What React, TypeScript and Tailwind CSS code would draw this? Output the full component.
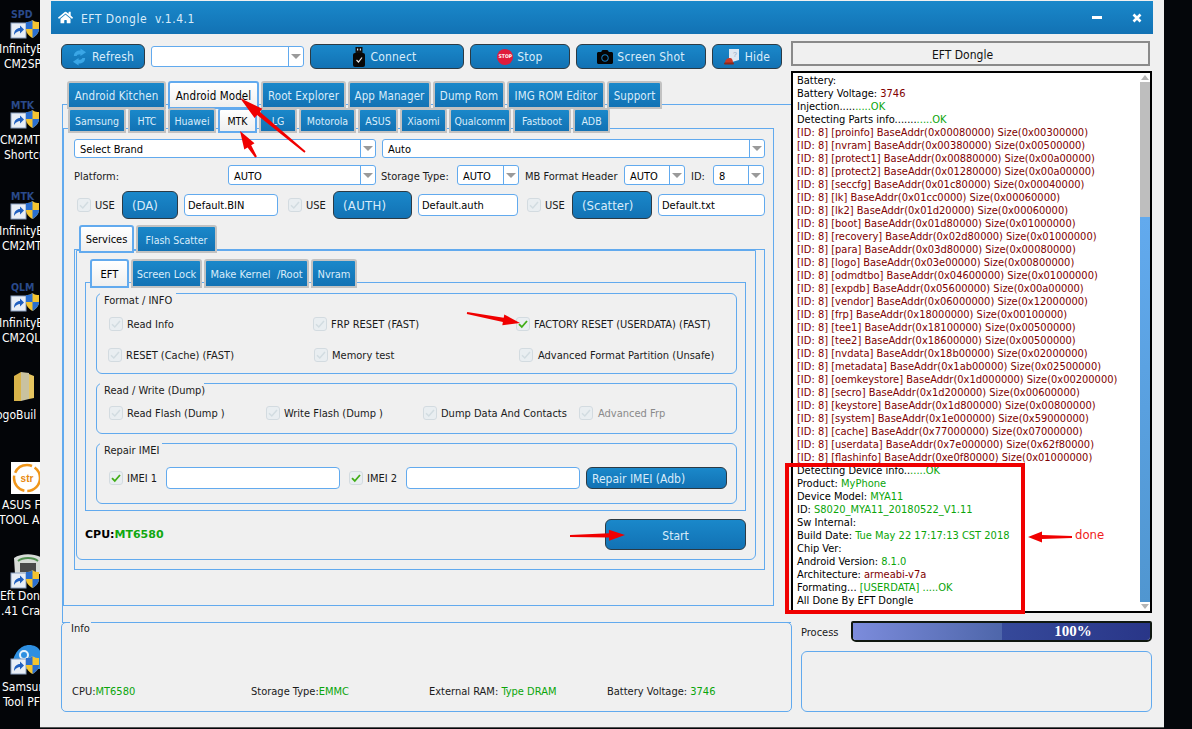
import React from "react";
import { FaHome, FaCamera } from "react-icons/fa";

const FONT = "font-['DejaVu_Sans_Condensed','Noto_Sans',sans-serif]";
const BLUE = "bg-gradient-to-b from-[#1a88ca] to-[#1272b4]";

function Tab({ label, w, h, active, cls = "text-[11px]" }: { label: string; w: number; h: number; active?: boolean; cls?: string }) {
  return (
    <div
      style={{ width: w, height: h }}
      className={
        "flex items-center justify-center shrink-0 whitespace-pre rounded-t-[3px] border-2 pt-[3px] " +
        cls +
        " " +
        (active
          ? "border-[#62aaee] bg-gradient-to-b from-white to-[#efefef] text-black"
          : "border-[#c2c2c2] text-[#d9ecfa] " + BLUE)
      }
    >
      {label}
    </div>
  );
}

function Caret() {
  return (
    <div className="flex w-[15px] h-full shrink-0 items-center justify-center border-l border-[#62aaee]">
      <div className="w-0 h-0 border-x-[5px] border-x-transparent border-t-[5px] border-t-[#9a9a9a]" />
    </div>
  );
}

function Select({ w, h = 20, text, cls = "" }: { w: number; h?: number; text?: string; cls?: string }) {
  return (
    <div
      style={{ width: w, height: h }}
      className={"flex shrink-0 items-center rounded-[3px] border border-[#62aaee] bg-white text-black " + cls}
    >
      <div className="flex-1 pl-[5px] pt-[3px] text-[11px] leading-[14px]">{text}</div>
      <Caret />
    </div>
  );
}

function Input({ w, h = 22, text }: { w: number; h?: number; text?: string }) {
  return (
    <div
      style={{ width: w, height: h }}
      className="flex shrink-0 items-center rounded-[4px] border border-[#62aaee] bg-white pl-[3px] pt-[2px] text-[11px] text-black"
    >
      {text}
    </div>
  );
}

function Check({ on }: { on?: boolean }) {
  return (
    <svg width="14" height="14" viewBox="0 0 14 14" className="shrink-0">
      <rect x="0.5" y="0.5" width="13" height="13" rx="2.5" fill="#e9eef1" stroke="#d3dbe0" />
      <path
        d="M3 7.2 L5.8 10 L11 4"
        fill="none"
        stroke={on ? "#41ad17" : "#d2dce1"}
        strokeWidth={on ? 1.8 : 1.5}
      />
    </svg>
  );
}

function CheckLabel({ label, w, gap = 4, on, dim }: { label: string; w?: number; gap?: number; on?: boolean; dim?: boolean }) {
  return (
    <div style={{ width: w, columnGap: gap }} className="flex h-[14px] shrink-0 items-center whitespace-nowrap">
      <Check on={on} />
      <span className={"pt-[2px] text-[11px] " + (dim ? "text-[#8a8a8a]" : "text-[#1a1a1a]")}>{label}</span>
    </div>
  );
}

function DarkBtn({ w, h, children, cls = "" }: { w: number; h: number; children?: React.ReactNode; cls?: string }) {
  return (
    <div
      style={{ width: w, height: h }}
      className={
        "flex shrink-0 items-center justify-center whitespace-nowrap rounded-[6px] border border-[#2b3a44] pt-[2px] text-[#d9ecfa] " +
        BLUE +
        " " +
        cls
      }
    >
      {children}
    </div>
  );
}

function Group({ title, titleW, h, mt, children }: { title: string; titleW: number; h: number; mt: number; children?: React.ReactNode }) {
  return (
    <div
      style={{ height: h, marginTop: mt }}
      className="relative ml-[10px] w-[641px] rounded-[6px] border border-[#62aaee]"
    >
      <div
        style={{ width: titleW }}
        className="absolute left-[3px] top-[-1px] h-[13px] whitespace-nowrap bg-[#f0f0f0] pl-[4px] text-[11px] leading-[16px] text-[#1a1a1a]"
      >
        {title}
      </div>
      {children}
    </div>
  );
}

function Arrow({ x1, y1, x2, y2, head = 17, hw = 5.5 }: { x1: number; y1: number; x2: number; y2: number; head?: number; hw?: number }) {
  const dx = x2 - x1;
  const dy = y2 - y1;
  const l = Math.hypot(dx, dy);
  const ux = dx / l;
  const uy = dy / l;
  const nx = -uy;
  const ny = ux;
  const bx = x2 - ux * head;
  const by = y2 - uy * head;
  const p = (x: number, y: number) => x.toFixed(1) + "," + y.toFixed(1);
  return (
    <polygon
      fill="#f00000"
      points={[
        p(x1 + nx * 1, y1 + ny * 1),
        p(bx + nx * 2.1, by + ny * 2.1),
        p(bx + nx * hw, by + ny * hw),
        p(x2, y2),
        p(bx - nx * hw, by - ny * hw),
        p(bx - nx * 2.1, by - ny * 2.1),
        p(x1 - nx * 1, y1 - ny * 1),
      ].join(" ")}
    />
  );
}

const parts: [string, string, string][] = [
  ["proinfo", "0x00080000", "0x00300000"],
  ["nvram", "0x00380000", "0x00500000"],
  ["protect1", "0x00880000", "0x00a00000"],
  ["protect2", "0x01280000", "0x00a00000"],
  ["seccfg", "0x01c80000", "0x00040000"],
  ["lk", "0x01cc0000", "0x00060000"],
  ["lk2", "0x01d20000", "0x00060000"],
  ["boot", "0x01d80000", "0x01000000"],
  ["recovery", "0x02d80000", "0x01000000"],
  ["para", "0x03d80000", "0x00080000"],
  ["logo", "0x03e00000", "0x00800000"],
  ["odmdtbo", "0x04600000", "0x01000000"],
  ["expdb", "0x05600000", "0x00a00000"],
  ["vendor", "0x06000000", "0x12000000"],
  ["frp", "0x18000000", "0x00100000"],
  ["tee1", "0x18100000", "0x00500000"],
  ["tee2", "0x18600000", "0x00500000"],
  ["nvdata", "0x18b00000", "0x02000000"],
  ["metadata", "0x1ab00000", "0x02500000"],
  ["oemkeystore", "0x1d000000", "0x00200000"],
  ["secro", "0x1d200000", "0x00600000"],
  ["keystore", "0x1d800000", "0x00800000"],
  ["system", "0x1e000000", "0x59000000"],
  ["cache", "0x77000000", "0x07000000"],
  ["userdata", "0x7e000000", "0x62f80000"],
  ["flashinfo", "0xe0f80000", "0x01000000"],
];

const G = "text-[#0aa50a]";
const R = "text-[#800000]";

function ShortcutShield() {
  return (
    <svg width="30" height="20" viewBox="0 0 30 20">
      <rect x="1" y="4" width="15" height="15" fill="#e8eef6" stroke="#8aa0c0" />
      <path d="M4 16 C4 11 7 9 10 9 L10 6.5 L14 10.5 L10 14.5 L10 12 C8 12 6 13 4 16 Z" fill="#1f5fc0" />
      <path d="M22.5 1 C25 3 27 3 29 3 L29 10 C29 14 26 17 22.5 19 C19 17 16 14 16 10 L16 3 C18 3 20 3 22.5 1 Z" fill="#f4c430" />
      <path d="M22.5 1 L22.5 10 L16 10 L16 3 C18 3 20 3 22.5 1 Z" fill="#2a6fd0" />
      <path d="M22.5 10 L29 10 C29 14 26 17 22.5 19 Z" fill="#2a6fd0" />
    </svg>
  );
}

function DeskLabel({ top, left, text }: { top: number; left: number; text: string }) {
  return (
    <div style={{ top, left }} className="absolute whitespace-nowrap text-[12px] leading-[15px] text-white">
      {text}
    </div>
  );
}

function Tag({ top, text }: { top: number; text: string }) {
  return (
    <div style={{ top }} className="absolute left-[11px] text-[10.5px] font-bold leading-[11px] text-[#2a4a8a]">
      {text}
    </div>
  );
}

function Desktop() {
  const shields = [19, 109, 200, 292];
  return (
    <div className="relative h-full w-[40px] shrink-0 overflow-hidden bg-[#030508]">
      <Tag top={9} text="SPD" />
      <Tag top={100} text="MTK" />
      <Tag top={191} text="MTK" />
      <Tag top={282} text="QLM" />
      {shields.map((t) => (
        <div key={t} style={{ top: t }} className="absolute left-[10px]">
          <ShortcutShield />
        </div>
      ))}
      <DeskLabel top={42} left={-1} text="InfinityB" />
      <DeskLabel top={57} left={4} text="CM2SP" />
      <DeskLabel top={133} left={0} text="CM2MT" />
      <DeskLabel top={148} left={4} text="Shortcu" />
      <DeskLabel top={224} left={-1} text="InfinityB" />
      <DeskLabel top={239} left={2} text="CM2MT" />
      <DeskLabel top={316} left={-1} text="InfinityB" />
      <DeskLabel top={331} left={2} text="CM2QL" />
      <svg width="22" height="32" viewBox="0 0 22 32" className="absolute left-[13px] top-[371px]">
        <path d="M1 5 L8 1 L8 30 L1 30 Z" fill="#d9b44a" />
        <path d="M8 1 L16 2 L16 28 L8 30 Z" fill="#c9c2a0" />
        <path d="M16 3 L21 5 L21 27 L16 28 Z" fill="#e6c560" />
      </svg>
      <DeskLabel top={408} left={-4} text="ogoBuil" />
      <div className="absolute left-[11px] top-[462px] h-[32px] w-[29px] bg-white">
        <svg width="34" height="32" viewBox="0 0 34 32">
          <circle cx="16" cy="16" r="13" fill="none" stroke="#f0961a" strokeWidth="2.5" strokeDasharray="20 3" />
          <text x="16" y="20" textAnchor="middle" fontSize="10" fontWeight="bold" fill="#e88a10" fontFamily="Liberation Sans, sans-serif">str</text>
        </svg>
      </div>
      <DeskLabel top={498} left={2} text="ASUS FI" />
      <DeskLabel top={513} left={-1} text="TOOL AI" />
      <svg width="30" height="22" viewBox="0 0 30 22" className="absolute left-[13px] top-[554px]">
        <path d="M1 4 C8 -1 22 -1 29 4 L28 20 L2 20 Z" fill="#d8dcd8" />
        <path d="M5 7 C10 3 20 3 25 7" stroke="#4f8f4f" strokeWidth="2" fill="none" />
        <rect x="7" y="9" width="16" height="9" fill="#4a4a4a" />
      </svg>
      <div className="absolute left-[10px] top-[569px]"><ShortcutShield /></div>
      <DeskLabel top={589} left={0} text="Eft Dong" />
      <DeskLabel top={604} left={1} text=".41 Crac" />
      <svg width="30" height="24" viewBox="0 0 30 24" className="absolute left-[11px] top-[645px]">
        <path d="M1 24 C1 8 10 0 18 0 C25 0 30 4 30 10 L30 24 Z" fill="#2e8fe0" />
        <circle cx="13" cy="10" r="4" fill="none" stroke="#e6f2fc" strokeWidth="2" />
        <circle cx="21" cy="15" r="2.5" fill="none" stroke="#e6f2fc" strokeWidth="1.5" />
      </svg>
      <div className="absolute left-[10px] top-[655px]"><ShortcutShield /></div>
      <DeskLabel top={680} left={2} text="Samsur" />
      <DeskLabel top={695} left={3} text="Tool PF" />
    </div>
  );
}

function Toolbar() {
  return (
    <div className="mt-[10px] flex h-[24px] items-center gap-[6px] text-[12px] tracking-[0.2px]">
      <DarkBtn w={84} h={25} cls="gap-[5px]">
        <svg width="15" height="18" viewBox="0 0 16 18">
          <path d="M2 8 C2 4 5 2 9 2 L9 0 L15 4 L9 8 L9 6 C6 6 5 7 5 8 Z" fill="#3aa6e6" />
          <path d="M14 10 C14 14 11 16 7 16 L7 18 L1 14 L7 10 L7 12 C10 12 11 11 11 10 Z" fill="#3aa6e6" />
        </svg>
        Refresh
      </DarkBtn>
      <Select w={153} h={21} />
      <DarkBtn w={154} h={25} cls="gap-[5px] pr-[4px]">
        <svg width="12" height="20" viewBox="0 0 12 20">
          <rect x="2.5" y="0" width="7" height="6" fill="#111" />
          <rect x="4" y="1.5" width="1.2" height="2" fill="#ddd" />
          <rect x="6.8" y="1.5" width="1.2" height="2" fill="#ddd" />
          <rect x="0" y="6" width="12" height="14" rx="2" fill="#080808" />
          <path d="M3.5 13 L5.5 15 L9 10.5" stroke="#e8e8e8" strokeWidth="1.2" fill="none" />
        </svg>
        Connect
      </DarkBtn>
      <DarkBtn w={100} h={25} cls="gap-[4px]">
        <div className="relative flex h-[16px] w-[16px] items-center justify-center rounded-full bg-[#e01c3c] text-[5px] font-bold tracking-normal text-white">
          STOP
        </div>
        Stop
      </DarkBtn>
      <DarkBtn w={130} h={25} cls="gap-[4px]">
        <FaCamera className="text-[16px] text-[#050505]" />
        Screen Shot
      </DarkBtn>
      <DarkBtn w={70} h={25} cls="gap-[5px]">
        <svg width="16" height="18" viewBox="0 0 16 18">
          <path d="M5 1 L15 1 L15 12 L8 14 L5 12 Z" fill="#dfe8f2" />
          <text x="9" y="9" fontSize="7" fill="#8ea6c0" fontFamily="Liberation Sans, sans-serif">?</text>
          <path d="M1 15 C1 11 4 10 6 10 C8 10 9 12 9 15 Z" fill="#c83a2a" />
          <rect x="0" y="14.5" width="10" height="2" rx="1" fill="#8a2a1c" />
        </svg>
        Hide
      </DarkBtn>
    </div>
  );
}

function Services() {
  return (
    <div className="-mt-[4px] h-[321px] w-[691px] border border-[#62aaee]">
      <div className="ml-[1px] h-[310px] w-[680px] rounded-b-[6px] border border-[#62aaee]">
        <div className="relative z-10 ml-[13px] mt-[8px] flex gap-[2px]">
          <Tab label="EFT" w={39} h={29} active />
          <Tab label="Screen Lock" w={71} h={29} />
          <Tab label="Make Kernel  /Root" w={105} h={29} />
          <Tab label="Nvram" w={46} h={29} />
        </div>
        <div className="-mt-[6px] ml-[8px] h-[229px] w-[661px] border border-[#62aaee]">
          <Group title="Format / INFO" titleW={76} h={81} mt={10}>
            <div className="flex pl-[12px] pt-[23px]">
              <CheckLabel label="Read Info" w={204} />
              <CheckLabel label="FRP RESET (FAST)" w={203} />
              <CheckLabel label="FACTORY RESET (USERDATA) (FAST)" on />
            </div>
            <div className="flex pl-[11px] pt-[17px]">
              <CheckLabel label="RESET (Cache) (FAST)" w={206} />
              <CheckLabel label="Memory test" w={205} />
              <CheckLabel label="Advanced Format Partition (Unsafe)" gap={5} />
            </div>
          </Group>
          <Group title="Read / Write (Dump)" titleW={104} h={51} mt={9}>
            <div className="flex pl-[12px] pt-[22px]">
              <CheckLabel label="Read Flash (Dump )" w={157} />
              <CheckLabel label="Write Flash (Dump )" w={157} />
              <CheckLabel label="Dump Data And Contacts" w={156} />
              <CheckLabel label="Advanced Frp" gap={5} dim />
            </div>
          </Group>
          <Group title="Repair IMEI" titleW={62} h={61} mt={9}>
            <div className="flex items-center pl-[12px] pt-[23px]">
              <CheckLabel label="IMEI 1" w={57} on />
              <Input w={174} />
              <div className="w-[9px]" />
              <CheckLabel label="IMEI 2" w={57} on />
              <Input w={174} />
              <DarkBtn w={141} h={22} cls="ml-[6px] !justify-start pl-[5px] text-[12px]">Repair IMEI (Adb)</DarkBtn>
            </div>
          </Group>
        </div>
        <div className="mt-[8px] flex items-center justify-between pl-[8px] pr-[9px]">
          <div className="pt-[2px] font-['DejaVu_Sans',sans-serif] text-[11px] font-bold">
            <span className="text-black">CPU:</span>
            <span className="text-[#10a810]">MT6580</span>
          </div>
          <DarkBtn w={141} h={31} cls="text-[12px]">Start</DarkBtn>
        </div>
      </div>
    </div>
  );
}

const ROW1 = "text-[11.5px] tracking-[0.1px]";
const ROW2 = "text-[10.5px]";

function LeftColumn() {
  return (
    <div className="w-[740px] shrink-0 pl-[10px]">
      <Toolbar />
      <div className="relative z-10 ml-[6px] mt-[13px] flex gap-[2px]">
        <Tab label="Android Kitchen" w={99} h={28} cls={ROW1} />
        <Tab label="Android Model" w={91} h={28} cls={ROW1} active />
        <Tab label="Root Explorer" w={85} h={28} cls={ROW1} />
        <Tab label="App Manager" w={83} h={28} cls={ROW1} />
        <Tab label="Dump Rom" w={72} h={28} cls={ROW1} />
        <Tab label="IMG ROM Editor" w={98} h={28} cls={ROW1} />
        <Tab label="Support" w={55} h={28} cls={ROW1} />
      </div>
      <div className="-mt-[5px] ml-[1px] h-[519px] w-[729px] border-b border-l border-t border-[#62aaee]">
        <div className="relative z-10 ml-[5px] mt-[3px] flex gap-[2px]">
          <Tab label="Samsung" w={58} h={25} cls={ROW2} />
          <Tab label="HTC" w={38} h={25} cls={ROW2} />
          <Tab label="Huawei" w={48} h={25} cls={ROW2} />
          <Tab label="MTK" w={39} h={25} cls={ROW2} active />
          <Tab label="LG" w={38} h={25} cls={ROW2} />
          <Tab label="Motorola" w={57} h={25} cls={ROW2} />
          <Tab label="ASUS" w={40} h={25} cls={ROW2} />
          <Tab label="Xiaomi" w={47} h={25} cls={ROW2} />
          <Tab label="Qualcomm" w={62} h={25} cls={ROW2} />
          <Tab label="Fastboot" w={58} h={25} cls={ROW2} />
          <Tab label="ADB" w={37} h={25} cls={ROW2} />
        </div>
        <div className="-mt-[5px] h-[478px] w-[711px] border border-[#62aaee] pl-[10px] pt-[10px]">
          <div className="flex gap-[6px]">
            <Select w={302} h={19} text="Select Brand" />
            <Select w={383} h={19} text="Auto" />
          </div>
          <div className="mt-[7px] flex h-[20px] items-center text-[11px] leading-[14px] text-[#1a1a1a]">
            <span className="w-[154px] pt-[3px]">Platform:</span>
            <Select w={148} text="AUTO" />
            <span className="w-[81px] pl-[5px] pt-[3px]">Storage Type:</span>
            <Select w={62} text="AUTO" />
            <span className="w-[105px] pl-[6px] pt-[3px]">MB Format Header</span>
            <Select w={61} text="AUTO" />
            <span className="w-[28px] pl-[6px] pt-[3px]">ID:</span>
            <Select w={51} text="8" />
          </div>
          <div className="mt-[6px] flex h-[28px] items-center">
            <div className="w-[3px]" />
            <CheckLabel label="USE" w={45} />
            <DarkBtn w={56} h={28} cls="!justify-start pl-[9px] text-[13px]">(DA)</DarkBtn>
            <div className="w-[6px]" />
            <Input w={94} text="Default.BIN" />
            <div className="w-[10px]" />
            <CheckLabel label="USE" w={45} />
            <DarkBtn w={79} h={28} cls="!justify-start pl-[9px] text-[13px] tracking-[0.3px]">(AUTH)</DarkBtn>
            <div className="w-[6px]" />
            <Input w={100} text="Default.auth" />
            <div className="w-[9px]" />
            <CheckLabel label="USE" w={45} />
            <DarkBtn w={80} h={28} cls="!justify-start pl-[9px] text-[13px]">(Scatter)</DarkBtn>
            <div className="w-[6px]" />
            <Input w={107} text="Default.txt" />
          </div>
          <div className="relative z-10 ml-[5px] mt-[6px] flex gap-[2px]">
            <Tab label="Services" w={55} h={28} active />
            <Tab label="Flash Scatter" w={81} h={28} cls="text-[10.5px]" />
          </div>
          <Services />
        </div>
      </div>
      <div className="relative -mt-[1px] h-[90px] w-[731px] rounded-[5px] border border-[#62aaee]">
        <div className="absolute left-[8px] top-[-1px] h-[14px] bg-[#f0f0f0] px-[1px] text-[11px] leading-[14px] text-[#1a1a1a]">
          Info
        </div>
        <div className="flex pl-[10px] pt-[61px] text-[11px] text-[#1a1a1a]">
          <div className="w-[179px]">CPU:<span className={G}>MT6580</span></div>
          <div className="w-[178px]">Storage Type:<span className={G}>EMMC</span></div>
          <div className="w-[178px]">External RAM: <span className={G}>Type DRAM</span></div>
          <div>Battery Voltage: <span className={G}>3746</span></div>
        </div>
      </div>
    </div>
  );
}

function LogLine({ children }: { children: React.ReactNode }) {
  return <div className="h-[13px] whitespace-nowrap leading-[13px]">{children}</div>;
}

function RightColumn() {
  return (
    <div className="w-[361px] shrink-0 pt-[7px]">
      <div className="flex h-[25px] w-[359px] items-center justify-center border-2 border-[#8a8a8a] pr-[16px] pt-[2px] text-[12px] text-[#111]">
        EFT Dongle
      </div>
      <div className="mt-[5px] flex h-[542px] w-[361px] border-2 border-black bg-white">
        <div className="flex-1 overflow-hidden pl-[4px] pt-[1px] text-[11px] text-black">
          <LogLine>Battery:</LogLine>
          <LogLine>Battery Voltage: <span className={R}>3746</span></LogLine>
          <LogLine>Injection.....<span className={G}>.....OK</span></LogLine>
          <LogLine>Detecting Parts info.......<span className={G}>.....OK</span></LogLine>
          {parts.map(([n, a, s]) => (
            <LogLine key={n}>
              <span className={R}>[ID: 8] [{n}] BaseAddr({a}) Size({s})</span>
            </LogLine>
          ))}
          <LogLine>Detecting Device info..<span className={G}>.....OK</span></LogLine>
          <LogLine>Product: <span className={G}>MyPhone</span></LogLine>
          <LogLine>Device Model: <span className={G}>MYA11</span></LogLine>
          <LogLine>ID: <span className={G}>S8020_MYA11_20180522_V1.11</span></LogLine>
          <LogLine>Sw Internal:</LogLine>
          <LogLine>Build Date: <span className={G}>Tue May 22 17:17:13 CST 2018</span></LogLine>
          <LogLine>Chip Ver:</LogLine>
          <LogLine>Android Version: <span className={G}>8.1.0</span></LogLine>
          <LogLine>Architecture: <span className={R}>armeabi-v7a</span></LogLine>
          <LogLine>Formating... <span className={G}>[USERDATA] .....OK</span></LogLine>
          <LogLine>All Done By EFT Dongle</LogLine>
        </div>
        <div className="flex w-[10px] shrink-0 flex-col items-center">
          <div className="flex h-[9px] items-center">
            <div className="h-0 w-0 border-x-[4px] border-b-[5px] border-x-transparent border-b-[#b4b4b4]" />
          </div>
          <div className="h-[135px] w-full bg-[#bebebe]" />
          <div className="w-full flex-1 bg-gradient-to-b from-[#62aaee] to-[#5096d0]" />
          <div className="flex h-[9px] items-center">
            <div className="h-0 w-0 border-x-[4px] border-t-[5px] border-x-transparent border-t-[#b4b4b4]" />
          </div>
        </div>
      </div>
      <div className="mt-[8px] flex h-[21px] items-center pl-[10px]">
        <span className="w-[50px] pt-[3px] text-[11px] text-[#1a1a1a]">Process</span>
        <div className="flex h-[21px] w-[301px] overflow-hidden rounded-b-[5px] rounded-t-[2px] border-2 border-[#101810]">
          <div className="h-full w-[149px] bg-gradient-to-r from-[#7c8cdc] to-[#4e66aa]" />
          <div className="flex h-full flex-1 items-center justify-center bg-gradient-to-r from-[#36499a] to-[#293688] pr-[6px] font-['Liberation_Serif',serif] text-[15px] font-bold text-white">
            100%
          </div>
        </div>
      </div>
      <div className="ml-[10px] mt-[9px] h-[61px] w-[351px] rounded-[6px] border border-[#62aaee]" />
    </div>
  );
}

export default function App() {
  return (
    <div className={"relative flex h-[729px] w-[1192px] overflow-hidden bg-[#04060a] " + FONT}>
      <Desktop />
      <div className="h-[728px] w-[1124px] shrink-0 border-b border-[#555] bg-[#f0f0f0] pl-[11px]">
        <div className="mt-[1px] flex h-[33px] w-[1102px] items-center bg-gradient-to-b from-[#1a88ca] to-[#1272b4] pl-[7px] pr-[11px] text-[#d9ecfa]">
          <FaHome className="text-[15px] text-white" />
          <span className="ml-[8px] whitespace-pre pt-[2px] text-[12px] tracking-[0.5px]">EFT Dongle  v.1.4.1</span>
          <div className="ml-auto h-[3px] w-[10px] bg-white" />
          <svg width="10" height="10" viewBox="0 0 10 10" className="ml-[30px]">
            <path d="M1.5 1.5 L8.5 8.5 M8.5 1.5 L1.5 8.5" stroke="white" strokeWidth="2.6" />
          </svg>
        </div>
        <div className="flex">
          <LeftColumn />
          <RightColumn />
        </div>
      </div>
      <div className="pointer-events-none absolute left-[785px] top-[463px] z-20 h-[151px] w-[240px] border-[4px] border-[#f00000]" />
      <div className="absolute left-[1075px] top-[526px] z-20 text-[13px] leading-[18px] text-[#f02020]">done</div>
      <svg width="1192" height="729" viewBox="0 0 1192 729" className="pointer-events-none absolute left-0 top-0 z-20">
        <Arrow x1={305} y1={152} x2={240} y2={98} head={24} hw={6} />
        <Arrow x1={256} y1={157} x2={240} y2={131} head={18} hw={6} />
        <Arrow x1={467} y1={313} x2={520} y2={323} head={17} />
        <Arrow x1={570} y1={536} x2={625} y2={535} head={16} />
        <Arrow x1={1072} y1={537} x2={1028} y2={537} head={14} />
      </svg>
    </div>
  );
}
